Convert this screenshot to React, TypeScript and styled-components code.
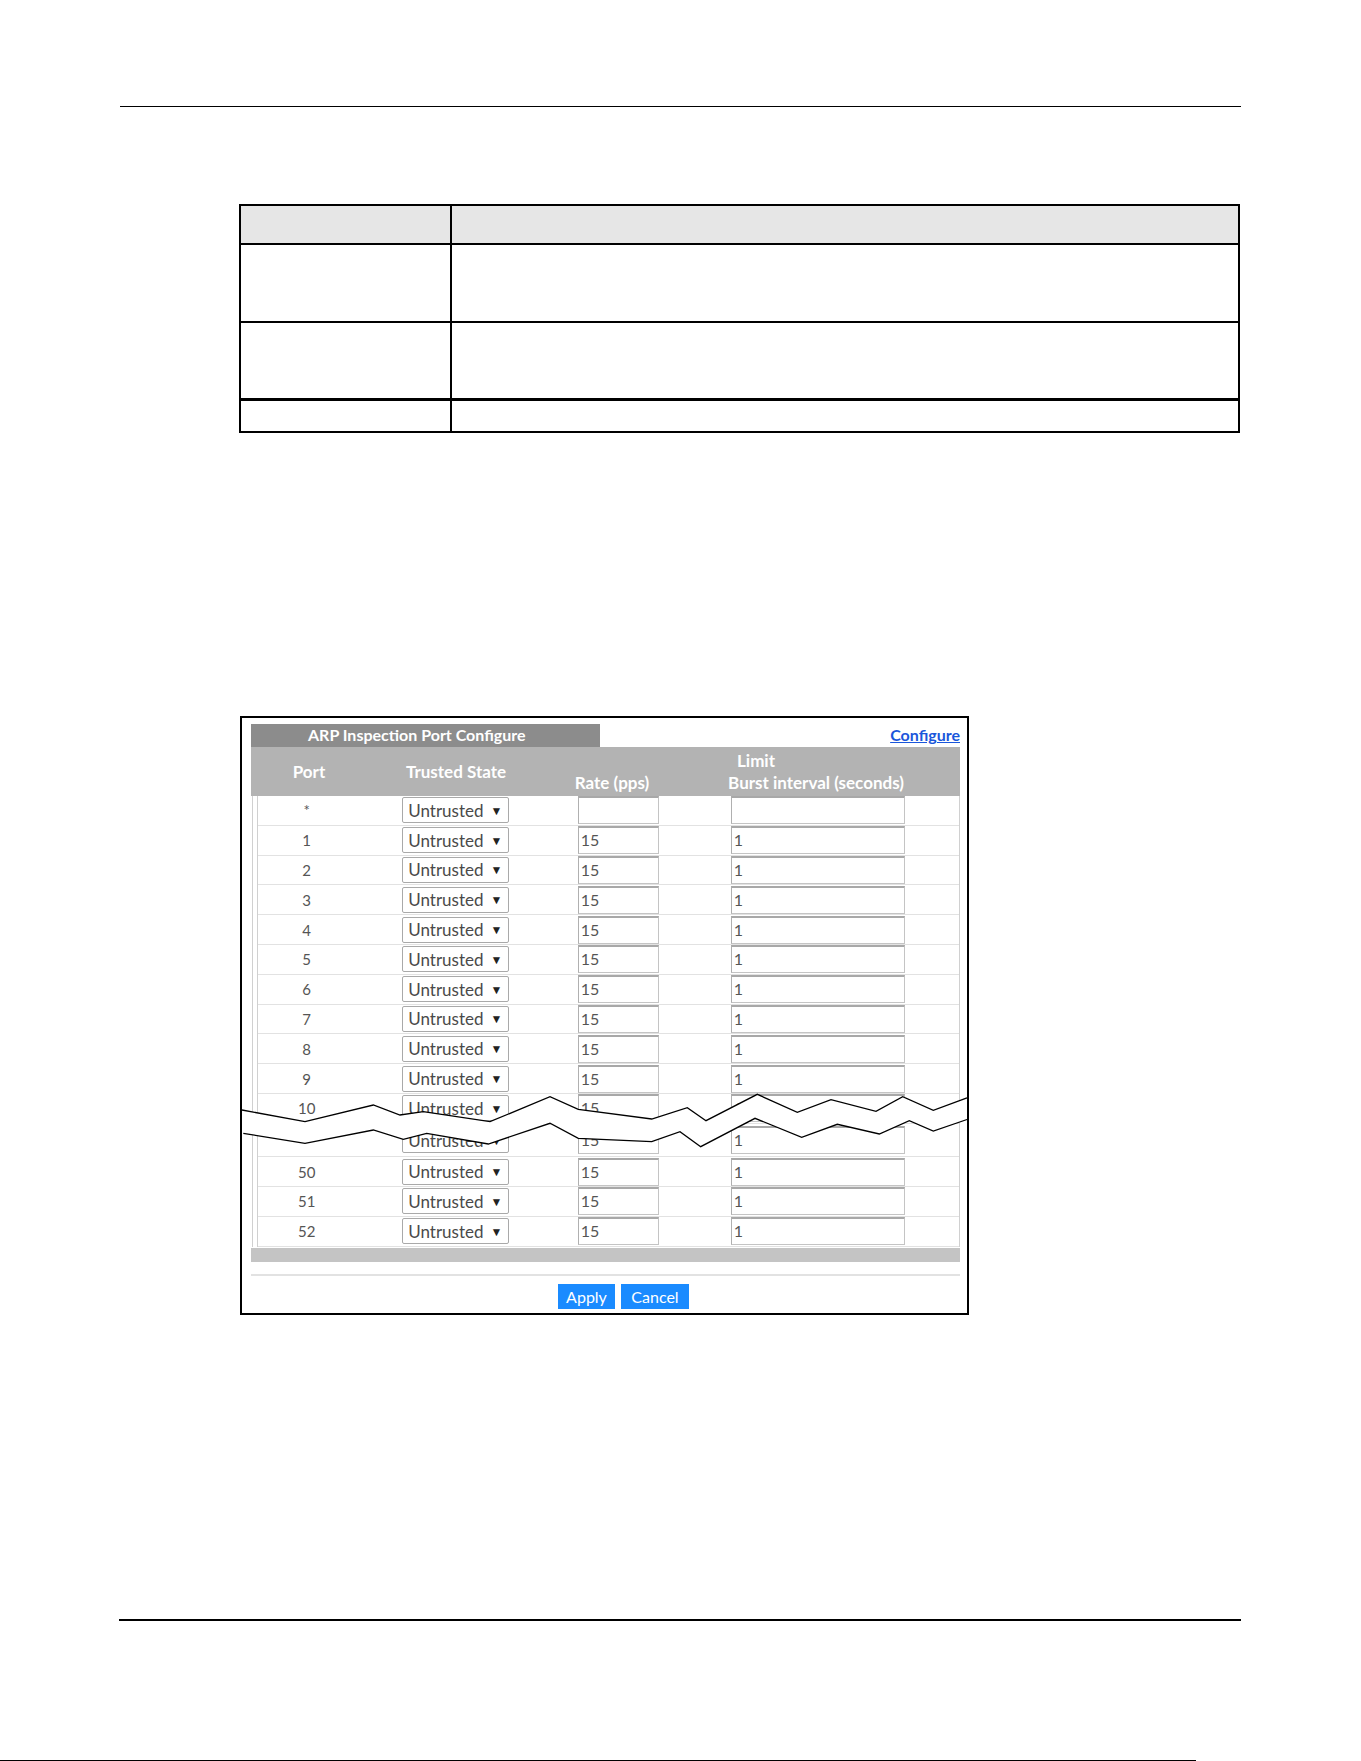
import React from 'react'
import styled, { createGlobalStyle } from 'styled-components'

const GlobalStyle = createGlobalStyle`
  body {
    margin: 0;
    background: #fff;
    font-family: Lato, 'Liberation Sans', sans-serif;
  }
`

interface PortRow {
  port: string
  rate: string
  burst: string
  tall?: boolean
}

const ports: PortRow[] = [
  { port: '*', rate: '', burst: '' },
  ...['1', '2', '3', '4', '5', '6', '7', '8', '9', '10'].map((p) => ({ port: p, rate: '15', burst: '1' })),
  { port: '', rate: '15', burst: '1', tall: true },
  ...['50', '51', '52'].map((p) => ({ port: p, rate: '15', burst: '1' })),
]

const COLS = '102px 192px 120px 1fr'

const Page = styled.div`
  width: 1361px;
  height: 1761px;
  display: flex;
  flex-direction: column;
  overflow: hidden;
`

const Rule = styled.div<{ $top: number; $left: number; $width: number; $thick: number }>`
  flex-shrink: 0;
  margin: ${({ $top }) => $top}px 0 0 ${({ $left }) => $left}px;
  width: ${({ $width }) => $width}px;
  height: ${({ $thick }) => $thick}px;
  background: #000;
`

const DescGrid = styled.div`
  flex-shrink: 0;
  margin: 97px 0 0 239px;
  width: 1001px;
  box-sizing: border-box;
  display: grid;
  grid-template-columns: 209px 1fr;
  grid-template-rows: 37px 76px 75px 31px;
  gap: 2px;
  padding: 2px;
  background: #000;
`

const DescCell = styled.div<{ $head?: boolean; $thick?: boolean }>`
  background: ${({ $head }) => ($head ? '#e6e6e6' : '#fff')};
  ${({ $thick }) => $thick && 'margin-top: 1px;'}
`

const Shot = styled.div`
  position: relative;
  flex-shrink: 0;
  margin: 283px 0 0 240px;
  width: 729px;
  box-sizing: border-box;
  border: 2px solid #000;
  padding: 6px 7px 4px 9px;
`

const TitleBar = styled.div`
  display: flex;
  height: 22.5px;
`

const Tab = styled.div`
  width: 349px;
  box-sizing: border-box;
  padding-left: 57px;
  background: #8c8c8c;
  color: #fff;
  font-size: 16px;
  font-weight: 700;
  line-height: 22px;
  white-space: nowrap;
`

const Link = styled.a`
  margin-left: auto;
  color: #1a56db;
  font-size: 16px;
  font-weight: 700;
  line-height: 22px;
  text-decoration: underline;
  cursor: pointer;
`

const Head = styled.div`
  display: grid;
  grid-template-columns: ${COLS};
  grid-template-rows: 23px 22px;
  height: 49.5px;
  box-sizing: border-box;
  padding: 2px 0 0 7px;
  background: #b3b3b3;
  color: #fff;
  font-size: 17px;
  font-weight: 700;
`

const HeadCell = styled.div<{ $col: string; $row: string }>`
  grid-column: ${({ $col }) => $col};
  grid-row: ${({ $row }) => $row};
  display: flex;
  align-items: center;
  justify-content: center;
  white-space: nowrap;
`

const Rows = styled.div`
  margin-left: 1px;
  width: 708px;
  box-sizing: border-box;
  border-left: 1px solid #d0d0d0;
  border-right: 1px solid #d0d0d0;
  padding-left: 3.7px;
`

const RowsInner = styled.div`
  border-left: 1px solid #d0d0d0;
`

const Row = styled.div<{ $tall?: boolean }>`
  display: grid;
  grid-template-columns: ${COLS};
  align-items: center;
  height: ${({ $tall }) => ($tall ? 33.5 : 29.8)}px;
  box-sizing: border-box;
  border-bottom: 1px solid #e2e2e2;
`

const PortCell = styled.div`
  padding-right: 4px;
  text-align: center;
  color: #555;
  font-size: 15px;
`

const SelectBox = styled.div`
  justify-self: center;
  display: flex;
  align-items: center;
  gap: 7px;
  width: 107px;
  height: 26px;
  box-sizing: border-box;
  padding-left: 5px;
  border: 1px solid #a9a9a9;
  border-radius: 2px;
  background: #fff;
  color: #4a4a4a;
  font-size: 17px;
  white-space: nowrap;
`

const Caret = styled.span`
  font-size: 12px;
  color: #222;
`

const Field = styled.div<{ $w: number; $ml: number }>`
  justify-self: start;
  margin-left: ${({ $ml }) => $ml}px;
  width: ${({ $w }) => $w}px;
  height: 28px;
  box-sizing: border-box;
  padding-left: 2px;
  border: 1px solid #c4c4c4;
  border-top: 2px solid #a8a8a8;
  border-left-color: #b0b0b0;
  background: #fff;
  color: #555;
  font-size: 16px;
  line-height: 24px;
`

const FootBar = styled.div`
  margin-top: 1px;
  height: 14.5px;
  background: #c4c4c4;
`

const Divider = styled.div`
  margin-top: 12px;
  height: 2px;
  background: #e2e2e2;
`

const Buttons = styled.div`
  display: flex;
  gap: 6px;
  margin-top: 8px;
  padding-left: 307px;
`

const Button = styled.button<{ $w: number }>`
  width: ${({ $w }) => $w}px;
  height: 24.5px;
  padding: 0;
  border: none;
  background: #1a8bff;
  color: #fff;
  font-family: Lato, 'Liberation Sans', sans-serif;
  font-size: 16px;
  cursor: pointer;
`

const Break = styled.svg`
  position: absolute;
  left: 0;
  top: 372px;
  width: 725px;
  height: 62px;
  overflow: visible;
`

const upper = [
  [0, 20], [63, 31.7], [131.3, 15], [158, 25], [181.3, 21.7], [248, 31.7], [308, 6.7],
  [336.3, 19.3], [409.7, 29], [445.3, 17.7], [464, 30.7], [515.3, 4.3], [555.3, 22.3],
  [589, 9.7], [634, 21.3], [660.7, 6.7], [691.3, 20.3], [725, 7.8],
]
const lower = [
  [1.3, 43.3], [63, 53.3], [131.3, 40], [161.3, 49.3], [184.7, 43.3], [246.3, 54], [308, 33.3],
  [336.3, 48.3], [409.7, 51.7], [438, 41.7], [458.7, 56.7], [513, 28.3], [559.7, 47.3],
  [595.3, 34.3], [637.3, 44], [667.3, 30.7], [691.3, 41], [725, 29.5],
]
const pts = (list: number[][]) => list.map(([x, y]) => `${x},${y}`).join(' ')

const BreakMark = () => (
  <Break viewBox='0 0 725 62'>
    <polygon points={`${pts(upper)} ${pts([...lower].reverse())}`} fill='#fff' />
    <polyline points={pts(upper)} fill='none' stroke='#000' strokeWidth='1.3' />
    <polyline points={pts(lower)} fill='none' stroke='#000' strokeWidth='1.3' />
  </Break>
)

export default function App() {
  return (
    <Page>
      <GlobalStyle />
      <Rule $top={106} $left={120} $width={1121} $thick={1} />

      <DescGrid>
        <DescCell $head />
        <DescCell $head />
        <DescCell />
        <DescCell />
        <DescCell />
        <DescCell />
        <DescCell $thick />
        <DescCell $thick />
      </DescGrid>

      <Shot>
        <TitleBar>
          <Tab>ARP Inspection Port Configure</Tab>
          <Link>Configure</Link>
        </TitleBar>

        <Head>
          <HeadCell $col='1' $row='1 / 3'>Port</HeadCell>
          <HeadCell $col='2' $row='1 / 3'>Trusted State</HeadCell>
          <HeadCell $col='3' $row='2'>Rate (pps)</HeadCell>
          <HeadCell $col='3 / 5' $row='1'>Limit</HeadCell>
          <HeadCell $col='4' $row='2'>Burst interval (seconds)</HeadCell>
        </Head>

        <Rows>
          <RowsInner>
            {ports.map((r, i) => (
              <Row key={i} $tall={r.tall}>
                <PortCell>{r.port}</PortCell>
                <SelectBox>
                  Untrusted <Caret>▼</Caret>
                </SelectBox>
                <Field $w={81} $ml={26}>{r.rate}</Field>
                <Field $w={174} $ml={59}>{r.burst}</Field>
              </Row>
            ))}
          </RowsInner>
        </Rows>

        <FootBar />
        <Divider />
        <Buttons>
          <Button $w={57}>Apply</Button>
          <Button $w={68}>Cancel</Button>
        </Buttons>

        <BreakMark />
      </Shot>

      <Rule $top={304} $left={119} $width={1122} $thick={2} />
      <Rule $top={139} $left={0} $width={1196} $thick={1} />
    </Page>
  )
}
